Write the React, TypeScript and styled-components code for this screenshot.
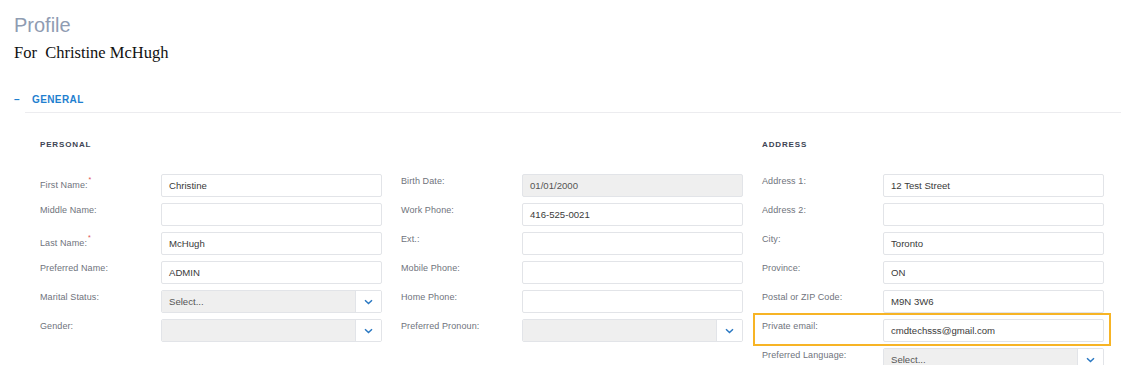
import styled, { createGlobalStyle } from 'styled-components';

const GlobalStyle = createGlobalStyle`
  body {
    margin: 0;
    background: #ffffff;
    font-family: 'Liberation Sans', Arial, sans-serif;
  }
`;

const Page = styled.div`
  width: 1121px;
  height: 365px;
  overflow: hidden;
  box-sizing: border-box;
  padding: 14px 0 0 14px;
`;

const Title = styled.h1`
  margin: 0;
  font-family: 'Liberation Sans', Arial, sans-serif;
  font-weight: 400;
  font-size: 20px;
  line-height: 23px;
  color: #8f9cb2;
`;

const Subtitle = styled.div`
  font-family: 'Liberation Serif', 'Times New Roman', serif;
  font-size: 16.5px;
  line-height: 19px;
  color: #111;
  margin-top: 6px;
  white-space: pre;
`;

const SectionHeader = styled.div`
  display: flex;
  align-items: center;
  gap: 12px;
  margin-top: 30px;
  height: 14px;
  color: #1f7fcf;
  font-size: 10px;
  font-weight: 700;
  letter-spacing: 0.4px;
`;

const Divider = styled.div`
  margin: 6px 0 0 11px;
  border-top: 1px solid #ececef;
`;

const Columns = styled.div`
  display: grid;
  grid-template-columns: repeat(3, 342px);
  column-gap: 19px;
  padding: 26px 0 0 26px;
`;

const Column = styled.div`
  display: flex;
  flex-direction: column;
`;

const GroupTitle = styled.div<{ $empty?: boolean }>`
  height: 10px;
  font-size: 8px;
  font-weight: 700;
  letter-spacing: 0.85px;
  color: #3d4454;
  margin-bottom: 24px;
  padding-top: 1px;
  visibility: ${(p) => (p.$empty ? 'hidden' : 'visible')};
`;

const Rows = styled.div`
  display: flex;
  flex-direction: column;
  gap: 6px;
`;

const Row = styled.div`
  display: grid;
  grid-template-columns: 121px 221px;
  height: 23px;
`;

const Label = styled.div`
  font-size: 9px;
  letter-spacing: 0.1px;
  color: #6f737c;
  padding-top: 2px;
  white-space: nowrap;
`;

const Req = styled.span`
  color: #e0504f;
  font-size: 7px;
  vertical-align: 6px;
  margin-left: 1px;
`;

const Field = styled.div<{ $disabled?: boolean }>`
  box-sizing: border-box;
  height: 23px;
  border: 1px solid #e2e4e8;
  border-radius: 2px;
  background: ${(p) => (p.$disabled ? '#efefef' : '#ffffff')};
  font-size: 9.6px;
  color: ${(p) => (p.$disabled ? '#555' : '#3a3a3a')};
  display: flex;
  align-items: center;
  padding-left: 7px;
`;

const SelectBox = styled.div`
  box-sizing: border-box;
  height: 23px;
  border: 1px solid #e2e4e8;
  border-radius: 2px;
  display: flex;
  overflow: hidden;
`;

const SelectValue = styled.div`
  flex: 1;
  background: #efefef;
  font-size: 9.6px;
  color: #555;
  display: flex;
  align-items: center;
  padding-left: 7px;
  border-right: 1px solid #e2e4e8;
`;

const SelectArrow = styled.div`
  width: 25px;
  display: flex;
  align-items: center;
  justify-content: center;
  background: #fff;
`;

const Highlight = styled.div`
  position: relative;
  &::before {
    content: '';
    position: absolute;
    left: -9px;
    right: -7px;
    top: -6px;
    bottom: -4px;
    border: 2px solid #f7b425;
    pointer-events: none;
  }
`;

const Chevron = () => (
  <svg width="9" height="6" viewBox="0 0 9 6">
    <path d="M1 1.2 L4.5 4.5 L8 1.2" fill="none" stroke="#2a78c2" strokeWidth="1.5" />
  </svg>
);

type Item = {
  label: string;
  value?: string;
  required?: boolean;
  kind?: 'text' | 'disabled' | 'select';
  highlight?: boolean;
};

const personal: Item[] = [
  { label: 'First Name:', value: 'Christine', required: true },
  { label: 'Middle Name:' },
  { label: 'Last Name:', value: 'McHugh', required: true },
  { label: 'Preferred Name:', value: 'ADMIN' },
  { label: 'Marital Status:', value: 'Select...', kind: 'select' },
  { label: 'Gender:', kind: 'select' },
];

const contact: Item[] = [
  { label: 'Birth Date:', value: '01/01/2000', kind: 'disabled' },
  { label: 'Work Phone:', value: '416-525-0021' },
  { label: 'Ext.:' },
  { label: 'Mobile Phone:' },
  { label: 'Home Phone:' },
  { label: 'Preferred Pronoun:', kind: 'select' },
];

const address: Item[] = [
  { label: 'Address 1:', value: '12 Test Street' },
  { label: 'Address 2:' },
  { label: 'City:', value: 'Toronto' },
  { label: 'Province:', value: 'ON' },
  { label: 'Postal or ZIP Code:', value: 'M9N 3W6' },
  { label: 'Private email:', value: 'cmdtechsss@gmail.com', highlight: true },
  { label: 'Preferred Language:', value: 'Select...', kind: 'select' },
];

const FormRow = ({ item }: { item: Item }) => {
  const row = (
    <Row>
      <Label>
        {item.label}
        {item.required && <Req>*</Req>}
      </Label>
      {item.kind === 'select' ? (
        <SelectBox>
          <SelectValue>{item.value}</SelectValue>
          <SelectArrow>
            <Chevron />
          </SelectArrow>
        </SelectBox>
      ) : (
        <Field $disabled={item.kind === 'disabled'}>{item.value}</Field>
      )}
    </Row>
  );
  return item.highlight ? <Highlight>{row}</Highlight> : row;
};

const Group = ({ title, items }: { title?: string; items: Item[] }) => (
  <Column>
    <GroupTitle $empty={!title}>{title || '-'}</GroupTitle>
    <Rows>
      {items.map((item) => (
        <FormRow key={item.label} item={item} />
      ))}
    </Rows>
  </Column>
);

const App = () => {
  return (
    <>
      <GlobalStyle />
      <Page>
        <Title>Profile</Title>
        <Subtitle>For  Christine McHugh</Subtitle>
        <SectionHeader>
          <span>–</span>
          <span>GENERAL</span>
        </SectionHeader>
        <Divider />
        <Columns>
          <Group title="PERSONAL" items={personal} />
          <Group items={contact} />
          <Group title="ADDRESS" items={address} />
        </Columns>
      </Page>
    </>
  );
};

export default App;
